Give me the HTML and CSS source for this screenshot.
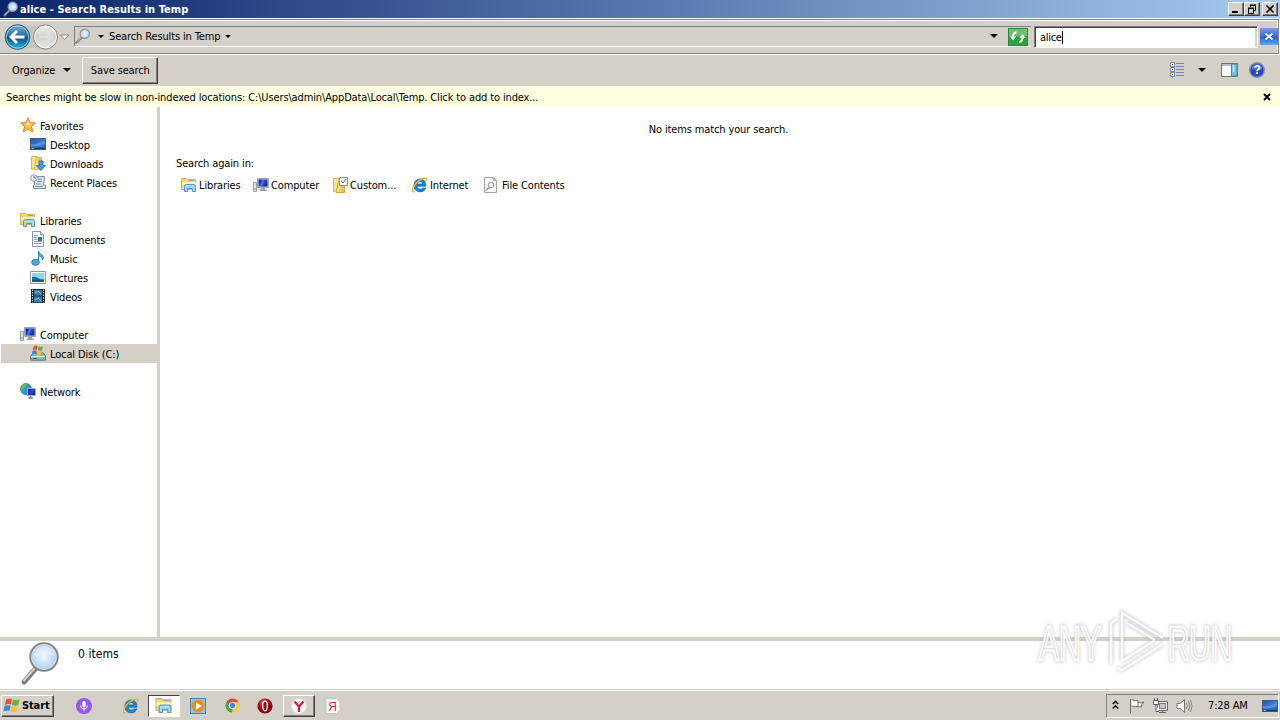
FILE: index.html
```html
<!DOCTYPE html>
<html lang="en">
<head>
    <meta charset="UTF-8">
    <title>alice - Search Results in Temp</title>
    <link rel="stylesheet" href="styles.css">
</head>
<body>
    <!-- shared icons -->
    <svg class="defs" width="0" height="0">
        <defs>
            <linearGradient id="gBlue" x1="0" y1="0" x2="1" y2="1"><stop offset="0" stop-color="#24559f"/><stop offset=".5" stop-color="#3977d4"/><stop offset="1" stop-color="#2b66c4"/></linearGradient>
            <linearGradient id="gFolder" x1="0" y1="0" x2="1" y2="0"><stop offset="0" stop-color="#fbeaa0"/><stop offset="1" stop-color="#e3bb45"/></linearGradient>
            <linearGradient id="gScreen" x1="0" y1="0" x2="1" y2="1"><stop offset="0" stop-color="#0718a0"/><stop offset=".5" stop-color="#2546d4"/><stop offset="1" stop-color="#081678"/></linearGradient>
            <linearGradient id="gBack" x1="0" y1="0" x2="0" y2="1"><stop offset="0" stop-color="#7fb0cf"/><stop offset=".48" stop-color="#246b9e"/><stop offset=".52" stop-color="#075083"/><stop offset="1" stop-color="#28bfe8"/></linearGradient>
            <linearGradient id="gFwd" x1="0" y1="0" x2="0" y2="1"><stop offset="0" stop-color="#efefef"/><stop offset=".5" stop-color="#cfcfcd"/><stop offset="1" stop-color="#e8e8e6"/></linearGradient>
            <radialGradient id="gLens"><stop offset="0" stop-color="#f2f9ff"/><stop offset="1" stop-color="#a9cef2"/></radialGradient>
            <radialGradient id="gRed" cx=".4" cy=".3"><stop offset="0" stop-color="#e88"/><stop offset=".5" stop-color="#bd1820"/><stop offset="1" stop-color="#7c0810"/></radialGradient>
        </defs>
        <symbol id="lens" viewBox="0 0 16 16">
            <path d="M6.5 9.5 1.5 14.5" stroke="#777" stroke-width="2.4" stroke-linecap="round"/>
            <path d="M6 9.5 1.7 14" stroke="#c9c9cc" stroke-width="1"/>
            <circle cx="9.7" cy="5.8" r="4.6" fill="url(#gLens)" stroke="#8a95a3" stroke-width="1.2"/>
        </symbol>
        <symbol id="star" viewBox="0 0 16 16">
            <path d="M8 .8 10.1 5.7 15.4 6 11.4 9.5 12.7 14.8 8 12 3.3 14.8 4.6 9.5.6 6 5.9 5.7Z" fill="#fbc343" stroke="#e27b1c" stroke-width="1"/>
            <path d="M8 3 9.3 6.6 12.5 7 8 8.5 4 7 6.7 6.6Z" fill="#ffe58e"/>
        </symbol>
        <symbol id="desktop" viewBox="0 0 16 16">
            <rect x=".5" y="2.5" width="15" height="11" fill="url(#gBlue)" stroke="#3b5b93"/>
            <path d="M1 8Q8 9 15 4V8Q8 11 1 10Z" fill="#6aa4ea" opacity=".6"/>
            <path d="M1 12.5H15" stroke="#16397a" stroke-width="1.5"/><path d="M1.5 12.5H4" stroke="#7fd06a"/>
        </symbol>
        <symbol id="downloads" viewBox="0 0 16 16">
            <path d="M1.5 1.5H7V13L1.5 14.5Z" fill="#f9e391" stroke="#d9b95a"/>
            <path d="M6.5 2.5H11.5V14.5H4Z" fill="url(#gFolder)" stroke="#d9b95a"/>
            <path d="M9 6H13V10.5H15.5L11 15.5 6.5 10.5H9Z" fill="#3d98dc" stroke="#246ca8" stroke-width=".8"/>
        </symbol>
        <symbol id="recent" viewBox="0 0 16 16">
            <path d="M4.5 2.5H14.5L13.5 11H15.5V14.5H3.5V11H4.5Z" fill="#dde7ef" stroke="#7e8c99"/>
            <path d="M8 5H12M7 7.500H12M6 10H11M5 12.5H13" stroke="#7c99b4"/>
            <circle cx="4" cy="4" r="3.3" fill="#f4f6f8" stroke="#8b949c"/><path d="M4 2V4H6" stroke="#567" fill="none"/>
        </symbol>
        <symbol id="libs" viewBox="0 0 16 16">
            <path d="M.5 3.5V1.500H5.500L6.500 2.500H14.500V12.500H.5Z" fill="#f0d778" stroke="#d0b055"/>
            <path d="M1 5H15V8H1Z" fill="#fdf3b9"/><path d="M8 3.500H13" stroke="#77b8a0"/>
            <path d="M3.500 14.500V9.500Q3.500 7.500 5.500 7.500H12.500Q14.500 7.500 14.500 9.500V14.500H11.500V11.500H6.500V14.500Z" fill="#a9d9f6" stroke="#4f97cc"/>
        </symbol>
        <symbol id="docs" viewBox="0 0 16 16">
            <path d="M2.500.5H10.500L13.500 3.500V15.500H2.500Z" fill="#fbfcfe" stroke="#8794a8"/>
            <path d="M10.500.5V3.500H13.500" fill="#dbe5f1" stroke="#8794a8"/>
            <path d="M4 4.500H8M4 6.500H7M4 8.500H7M4 10.500H12M4 12.500H12" stroke="#85a7cf"/><rect x="8" y="6" width="4" height="4" fill="#356f9e"/>
        </symbol>
        <symbol id="music" viewBox="0 0 16 16">
            <path d="M8.500 12V1Q9.500 4 12 5Q14.500 7 12.500 10Q12.500 7 9.500 5.800" fill="#4fb4e6" stroke="#2587c4"/>
            <ellipse cx="5.500" cy="12.300" rx="3.800" ry="2.900" fill="#48a9e3" stroke="#2276b4"/>
        </symbol>
        <symbol id="pics" viewBox="0 0 16 16">
            <rect x=".5" y="2.500" width="15" height="12" fill="#fff" stroke="#8e969d"/>
            <rect x="2" y="4" width="12" height="9" fill="#8fd6f0"/><path d="M2 8Q5 7 8 9T14 10V13H2Z" fill="#1d6f83"/><path d="M2 11Q9 10 14 12V13H2Z" fill="#1b4e9a"/>
        </symbol>
        <symbol id="video" viewBox="0 0 16 16">
            <rect x="1" y="1" width="14" height="14" fill="#23262b"/><rect x="4" y="2" width="8" height="5.500" fill="#2e7eb5"/><rect x="4" y="8.500" width="8" height="6" fill="#347dac"/>
            <path d="M5 5 8 3 11 6M5 12 8 10 11 13" stroke="#74cfe5" fill="none"/>
            <path d="M2.500 1.500V15M13.500 1.500V15" stroke="#dde2e6" stroke-dasharray="1.300 1.300"/>
        </symbol>
        <symbol id="computer" viewBox="0 0 16 16">
            <path d="M.5 5.500H3.500V14.500H.5Z" fill="#dfe1e4" stroke="#9a9da2"/><path d="M1 12H3" stroke="#5b5"/>
            <path d="M4.500 1.500H15.500V10.500H4.500Z" fill="#c7ccd6" stroke="#9ca3b1"/><path d="M5.500 2.500H14.500V9.500H5.500Z" fill="url(#gScreen)"/>
            <path d="M9 2.500H11.500L9 9.500H7Z" fill="#7590ee" opacity=".6"/><path d="M8 11H12V12.500H14V14H6.500V12.500H8Z" fill="#9ba1ad"/>
        </symbol>
        <symbol id="flag4" viewBox="0 0 16 16">
            <path d="M2.500 2.500Q5 .5 8 2L7 7Q4 6 1.200 7.500Z" fill="#e6532b"/><path d="M9 2.400Q12 4 15 2.200L13.800 7.500Q11 9 8 7.400Z" fill="#6dac35"/>
            <path d="M1 8.500Q4 7 6.800 8.200L5.600 13Q3 12-.1 13.500Z" fill="#3f82d6"/><path d="M7.800 8.600Q11 10 13.500 8.700L12.300 13.600Q9 15 6.600 13.500Z" fill="#f5be2c"/>
        </symbol>
        <symbol id="disk" viewBox="0 0 16 16">
            <path d="M.8 11 3 8H13.500L15.500 11V15.200H.8Z" fill="#8eb3c0" stroke="#557782"/><path d="M1 11.500H15" stroke="#dcebee"/><path d="M3 13.500H7" stroke="#476e7b"/><rect x="12" y="13" width="2" height="1" fill="#69e03e"/>
            <use href="#flag4" x="1.500" y="-.5" width="12.500" height="12"/>
        </symbol>
        <symbol id="network" viewBox="0 0 16 16">
            <circle cx="6" cy="6" r="5.500" fill="#3390d1" stroke="#1d6aa6" stroke-width=".7"/><path d="M1 4Q3 0 7 1L6 4 3 6 4 9 1 7Z" fill="#5bc05b"/>
            <rect x="7.500" y="5.500" width="8" height="7" fill="url(#gScreen)" stroke="#a1adc3"/><path d="M10.500 13V15M8.500 15H13" stroke="#6c7482" stroke-width="1.500"/>
        </symbol>
        <symbol id="ie" viewBox="0 0 16 16">
            <path d="M14 9.200H5Q5.200 12.200 8.300 12.200Q10 12.200 10.700 10.900H13.800Q12.500 14.900 8.200 14.900Q1.900 14.500 1.800 8.300Q2.200 2.100 8.200 1.900Q14.200 2.300 14 9.200M5.100 6.900H10.700Q10.300 4.500 8 4.500Q5.600 4.600 5.100 6.900" fill="#1987d2" stroke="#0a5297" stroke-width=".6" fill-rule="evenodd"/>
            <path d="M2.500 14.700Q-.8 15.500 1 11 4.200 4.300 11 1.500 16.200-.4 14.400 4.400" fill="none" stroke="#e7b529" stroke-width="1.400"/>
        </symbol>
        <symbol id="custom" viewBox="0 0 16 16">
            <path d="M1.500 1.500H7V13L1.500 14.500Z" fill="#f9e391" stroke="#d9b95a"/><path d="M6.500 4.500H12.500V15.500H4Z" fill="url(#gFolder)" stroke="#cda647"/>
            <path d="M7.500.5H15.500V8.500H7.500Z" fill="#f8fbff" stroke="#7c90ac"/><path d="M9 4 11 6 14 2" fill="none" stroke="#3b6f9f"/>
        </symbol>
        <symbol id="filec" viewBox="0 0 16 16">
            <path d="M1.500.5H10.500L13.500 3.500V15.500H1.500Z" fill="#fafafa" stroke="#a0a4aa"/><path d="M10.500.5V3.500H13.500" fill="none" stroke="#a0a4aa"/>
            <circle cx="8" cy="8" r="2.800" fill="#e8f3fa" stroke="#8b9299"/><path d="M6 10.500 3 13.500" stroke="#8b9299" stroke-width="1.500"/>
        </symbol>
    </svg>

    <div class="window">
        <header class="titlebar">
            <svg class="icon"><use href="#lens"/></svg>
            <h1>alice - Search Results in Temp</h1>
            <div class="caption-buttons">
                <button class="caption"><svg width="14" height="12"><path d="M3 9H9" stroke="#000" stroke-width="2"/></svg></button>
                <button class="caption"><svg width="14" height="12"><path d="M5 2.500H10.500V7.500H8.500M5.500 4V2M5 2H11" fill="none" stroke="#000"/><path d="M3.500 5.500H8.500V10.500H3.500ZM3 5H9" fill="none" stroke="#000"/></svg></button>
                <button class="caption close"><svg width="14" height="12"><path d="M3.500 2.500 10.500 9.500M10.500 2.500 3.500 9.500" stroke="#000" stroke-width="1.700"/></svg></button>
            </div>
        </header>

        <div class="navbar">
            <svg class="nav-buttons" width="72" height="30">
                <path d="M18 1.500Q32 7 46 1.500V28.500Q32 23 18 28.500Z" fill="#c6c3bc"/>
                <circle cx="17.500" cy="15" r="12.300" fill="url(#gBack)" stroke="#285d83"/><circle cx="17.500" cy="15" r="11.200" fill="none" stroke="#d5eaf5" opacity=".6"/>
                <path d="M11.500 15H24.500M17 9 11 15 17 21" fill="none" stroke="#fff" stroke-width="2.800"/>
                <circle cx="45.500" cy="15" r="12" fill="url(#gFwd)" stroke="#888"/><circle cx="45.500" cy="15" r="10.800" fill="none" stroke="#fff" opacity=".7"/>
                <path d="M39 15H51M46 9.500 52 15 46 20.500" fill="none" stroke="#ddd" stroke-width="2.500"/>
                <path d="M60.500 13H69L64.700 17.500Z" fill="#f4f4f2" stroke="#8a8984" stroke-width=".9"/>
            </svg>
            <div class="address">
                <svg class="icon"><use href="#lens"/></svg>
                <i class="arrow small"></i>
                <span class="crumb">Search Results in Temp</span>
                <i class="arrow small"></i>
                <i class="arrow history"></i>
            </div>
            <button class="refresh"><svg width="20" height="18"><rect width="20" height="18" fill="#2da43c"/><rect width="20" height="8" fill="#6bc26e"/><rect x=".5" y=".5" width="19" height="17" fill="none" stroke="#2f8a3a"/><path d="M8.500 4.500Q5 4.500 5 9" fill="none" stroke="#fff" stroke-width="2"/><path d="M1.800 8.500H8.200L5 12.500Z" fill="#fff"/><path d="M11 14Q14.500 13.500 14.500 9.500" fill="none" stroke="#fff" stroke-width="2"/><path d="M11.300 10H17.700L14.500 6Z" fill="#fff"/></svg></button>
            <div class="search"><span class="query">alice</span></div>
            <button class="clear"><svg width="18" height="17"><path d="M5.500 5.500 12.500 11.500M12.500 5.500 5.500 11.500" stroke="#234fa0" stroke-width="3.200"/><path d="M5.500 5.500 12.500 11.500M12.500 5.500 5.500 11.500" stroke="#fff" stroke-width="1.900"/></svg></button>
        </div>

        <div class="toolbar">
            <span class="organize">Organize</span>
            <i class="arrow"></i>
            <button class="save">Save search</button>
            <div class="view-tools">
                <svg width="16" height="16"><path d="M1.500.5H5.500V4.500H1.500ZM1.500 5.500H5.500V9.500H1.500ZM1.500 10.500H5.500V14.500H1.500Z" fill="#fff" stroke="#718a94"/><path d="M3 2.500H4M3 7.500H4M3 12.500H4" stroke="#247"/><path d="M7 1.500H15M7 4.500H15M7 7.500H15M7 10.500H15M7 13.500H15" stroke="#7782aa"/></svg>
                <i class="arrow"></i>
                <svg width="17" height="16"><path d="M.5 1.500H16.500V14.500H.5Z" fill="#fff" stroke="#54778f"/><path d="M1 3H10" stroke="#a8c2d1" stroke-width="2"/><path d="M10.500 2H16V14H10.500Z" fill="#81c2e2" stroke="#4387aa"/><path d="M12 3H13V10H12Z" fill="#d3f0fb"/></svg>
                <svg width="16" height="16"><circle cx="8" cy="8" r="7.300" fill="#2749b8" stroke="#8391b2" stroke-width="1.400"/><path d="M2.500 7Q3 2.500 8 2.300 13 2.500 13.500 7Q8 9 2.500 7" fill="#6c91df" opacity=".6"/><text x="8" y="12.200" class="help-mark">?</text></svg>
            </div>
        </div>

        <div class="infobar">
            <span>Searches might be slow in non-indexed locations: C:\Users\admin\AppData\Local\Temp. Click to add to index...</span>
            <svg width="8" height="8"><path d="M1 1 7 7M7 1 1 7" stroke="#000" stroke-width="2"/></svg>
        </div>

        <div class="content">
            <nav class="sidebar">
                <ul>
                    <li class="group"><svg class="icon"><use href="#star"/></svg><span>Favorites</span></li>
                    <li><svg class="icon"><use href="#desktop"/></svg><span>Desktop</span></li>
                    <li><svg class="icon"><use href="#downloads"/></svg><span>Downloads</span></li>
                    <li><svg class="icon"><use href="#recent"/></svg><span>Recent Places</span></li>
                </ul>
                <ul>
                    <li class="group"><svg class="icon"><use href="#libs"/></svg><span>Libraries</span></li>
                    <li><svg class="icon"><use href="#docs"/></svg><span>Documents</span></li>
                    <li><svg class="icon"><use href="#music"/></svg><span>Music</span></li>
                    <li><svg class="icon"><use href="#pics"/></svg><span>Pictures</span></li>
                    <li><svg class="icon"><use href="#video"/></svg><span>Videos</span></li>
                </ul>
                <ul>
                    <li class="group"><svg class="icon"><use href="#computer"/></svg><span>Computer</span></li>
                    <li class="selected"><svg class="icon"><use href="#disk"/></svg><span>Local Disk (C:)</span></li>
                </ul>
                <ul>
                    <li class="group"><svg class="icon"><use href="#network"/></svg><span>Network</span></li>
                </ul>
            </nav>
            <main class="results">
                <p class="empty">No items match your search.</p>
                <p class="again">Search again in:</p>
                <div class="places">
                    <a class="p-lib"><svg class="icon"><use href="#libs"/></svg>Libraries</a>
                    <a class="p-comp"><svg class="icon"><use href="#computer"/></svg>Computer</a>
                    <a class="p-cust"><svg class="icon"><use href="#custom"/></svg>Custom...</a>
                    <a class="p-net"><svg class="icon"><use href="#ie"/></svg>Internet</a>
                    <a class="p-file"><svg class="icon"><use href="#filec"/></svg>File Contents</a>
                </div>
            </main>
        </div>

        <footer class="details">
            <svg width="42" height="44"><path d="M16 26 4 40" stroke="#77797c" stroke-width="5" stroke-linecap="round"/><path d="M15 26 3.500 39" stroke="#d4d5d7" stroke-width="2"/><circle cx="24" cy="15" r="13.500" fill="url(#gLens)" stroke="#808388" stroke-width="2.400"/><circle cx="24" cy="15" r="12.300" fill="none" stroke="#dadde0" stroke-width="1.200"/><path d="M13 16Q24 10 35 14Q34 4 24 4 14 5 13 16" fill="#fff" opacity=".35"/></svg>
            <span>0 items</span>
        </footer>
    </div>

    <div class="taskbar">
        <button class="start"><svg width="18" height="17"><use href="#flag4" width="18" height="17"/></svg>Start</button>
        <div class="task t-alice"><svg width="16" height="16"><circle cx="8" cy="8" r="8" fill="#9158f2"/><rect x="6.300" y="3" width="3.400" height="6.500" rx="1.700" fill="#fff"/><path d="M4.500 7.500Q4.800 11 8 11T11.500 7.500M8 11V13" fill="none" stroke="#fff"/></svg></div>
        <div class="task t-ie"><svg class="icon"><use href="#ie"/></svg></div>
        <div class="task pressed"><svg width="18" height="17"><use href="#libs" width="18" height="17"/></svg></div>
        <div class="task t-media"><svg width="16" height="16"><rect x=".5" y=".5" width="15" height="15" fill="#8ec7eb" stroke="#3b87bb"/><circle cx="8" cy="8" r="6.300" fill="#f28c16"/><path d="M6 4.500 12 8 6 11.500Z" fill="#fff"/></svg></div>
        <div class="task t-chrome"><svg width="15" height="15" viewBox="0 0 16 16"><circle cx="8" cy="8" r="7.500" fill="#f8c93a"/><path d="M1.500 4.200A7.500 7.500 0 0 1 14.500 4.200H8Q5 5 4.800 9Z" fill="#e4483b"/><path d="M1.500 4.200 4.800 9.800 8 11.500 7.500 15.500A7.500 7.500 0 0 1 1.500 4.200" fill="#3fa556"/><circle cx="8" cy="8" r="3.500" fill="#4386ee" stroke="#fff"/></svg></div>
        <div class="task t-opera"><svg width="16" height="16"><circle cx="8" cy="8" r="7.600" fill="url(#gRed)"/><ellipse cx="8" cy="8" rx="2.300" ry="4.800" fill="#8c1118" stroke="#fff" stroke-width="1.200"/></svg></div>
        <div class="task raised"><svg width="16" height="16"><circle cx="8" cy="8" r="7.500" fill="#faf8f7" stroke="#e2dfdb"/><path d="M3.500 3.500 8 8.500 12.500 3.500M8 8V14" fill="none" stroke="#cf2233" stroke-width="2.200"/></svg></div>
        <div class="task t-ya"><svg width="16" height="16"><path d="M1 .5H11.500L15 4V12L11.500 15.500H1Z" fill="#fff" stroke="#c7c0bb"/><text x="7.500" y="12.500" class="ya">Я</text></svg></div>
        <div class="tray">
            <svg width="7" height="11"><path d="M.8 4 3.500 1.300 6.200 4M.8 8.500 3.500 5.800 6.200 8.500" fill="none" stroke="#000" stroke-width="1.500"/></svg>
            <svg width="16" height="16"><path d="M1.500 1V15.500M2.500 1.500Q6 3.500 9 2.500V8.500Q5 9 2.500 8M9 4.500Q12 5.500 15 4L12.500 7 13 8.500Q10 9 8 8.500" fill="#fff" stroke="#6e6d69"/></svg>
            <svg width="17" height="16"><path d="M5.500 3.500H15.500V12.500H5.500Z" fill="#f4f4f2" stroke="#666"/><path d="M7.500 5.500H13.500V10.500H7.500Z" fill="#c9c7c1" stroke="#777"/><path d="M7 14.500H14M10.500 12V14" stroke="#666"/><path d="M1.500 2.500H6.500V6.500H1.500ZM2.500 0V3M5.500 0V3M4 6V13.500H7" fill="#fff" stroke="#5d5c58"/></svg>
            <svg width="17" height="16"><path d="M1 5.500H4L8.500 1.500V14.500L4 10.500H1Z" fill="#fff" stroke="#777"/><path d="M10.500 5Q12 8 10.500 11M12.500 3Q15 8 12.500 13M14.500 2Q17.500 8 14.500 14" fill="none" stroke="#888"/></svg>
            <time>7:28 AM</time>
            <svg class="icon"><use href="#desktop"/></svg>
        </div>
    </div>

    <svg class="watermark" width="204" height="72">
        <defs>
            <g id="mark">
                <text x="6" y="55" textLength="62" lengthAdjust="spacingAndGlyphs">ANY</text>
                <text x="135" y="55" textLength="64" lengthAdjust="spacingAndGlyphs">RUN</text>
                <path d="M78 59V18L84 14M89 56V8L130 33M94 18 122 35M89 56 121 36M84 63 89 65 130 39"/>
            </g>
        </defs>
        <use href="#mark" class="wm-glow"/>
        <use href="#mark" class="wm-face"/>
    </svg>
</body>
</html>
```

FILE: styles.css
```css
* {
    margin: 0;
    padding: 0;
    box-sizing: border-box;
}

body {
    width: 1280px;
    height: 720px;
    overflow: hidden;
    display: flex;
    flex-direction: column;
    background: #fff;
    color: #000;
    font-family: "DejaVu Sans Condensed", "DejaVu Sans", sans-serif;
    font-stretch: condensed;
    font-size: 11px;
    line-height: 13px;
    letter-spacing: -0.13px;
    white-space: nowrap;
}

button {
    font: inherit;
    letter-spacing: inherit;
    color: inherit;
    border: none;
}

svg {
    display: block;
    flex: none;
}

.defs {
    position: absolute;
}

.icon {
    width: 16px;
    height: 16px;
}

.window {
    flex: 1;
    display: flex;
    flex-direction: column;
}

/* title bar */
.titlebar {
    height: 18px;
    display: flex;
    align-items: center;
    padding: 0 2px 0 3px;
    background: linear-gradient(90deg, #0a246a, #a6caf0);
    color: #fff;
}

.titlebar h1 {
    margin-left: 1px;
    font-size: 11px;
    font-weight: bold;
    letter-spacing: 0.05px;
}

.caption-buttons {
    display: flex;
    margin-left: auto;
}

.caption {
    width: 16px;
    height: 14px;
    background: #d4d0c8;
    border: 1px solid;
    border-color: #fff #404040 #404040 #fff;
    box-shadow: inset -1px -1px #808080;
}

.caption.close {
    margin-left: 2px;
}

/* address row */
.navbar {
    height: 35px;
    display: flex;
    align-items: center;
    background: #d4d0c8;
    border: 1px solid #808080;
    border-width: 1px 1px 1px 0;
    box-shadow: inset 0 1px #fff, inset -1px 0 #fff, 0 1px #fff;
    margin-right: 1px;
    margin-top: 1px;
    position: relative;
}

.nav-buttons {
    margin-right: 2px;
}

.address {
    width: 957px;
    height: 21px;
    display: flex;
    align-items: center;
    border-top: 1px solid #808080;
    border-left: 1px solid #808080;
    border-bottom: 1px solid #fff;
    padding: 0 33px 1px 0;
}

.arrow {
    border: 4px solid transparent;
    border-top-color: #000;
    border-bottom: none;
}

.arrow.small {
    border-width: 3px 3px 0;
}

.address .icon {
    margin-right: 7px;
}

.crumb {
    margin: 0 5px 0 5px;
}

.arrow.history {
    margin-left: auto;
}

.refresh {
    margin-left: -23px;
    width: 20px;
}

.search {
    width: 224px;
    height: 22px;
    margin-left: 6px;
    background: #fff;
    border: 1px solid;
    border-color: #808080 #fff #fff #808080;
    box-shadow: inset 1px 1px #404040, inset -2px 0 #d4d0c8;
    padding: 4px 5px;
}

.query {
    display: inline-block;
    height: 13px;
    border-right: 1px solid #000;
    letter-spacing: -0.3px;
}

.clear {
    width: 18px;
    height: 17px;
    margin-left: 2px;
    background: linear-gradient(#7a9cd8, #3d6ecd 50%, #315cc2 52%, #62a8ea);
}

/* command bar */
.toolbar {
    height: 32px;
    display: flex;
    align-items: center;
    background: #d4d0c8;
    border-top: 1px solid #fff;
    padding: 0 0 1px 12px;
}

.organize + .arrow {
    margin-left: 8px;
}

.save {
    width: 76px;
    height: 27px;
    margin-left: 11px;
    background: #d4d0c8;
    border: 1px solid;
    border-color: #fff #404040 #404040 #fff;
    box-shadow: inset -1px -1px #808080;
}

.view-tools {
    display: flex;
    align-items: center;
    margin-left: auto;
    padding-right: 15px;
}

.view-tools .arrow {
    margin: 0 15px 0 13px;
}

.view-tools svg:last-child {
    margin-left: 11px;
}

.help-mark {
    fill: #fff;
    font: bold 12px "Liberation Sans", sans-serif;
    text-anchor: middle;
}

.infobar {
    height: 21px;
    display: flex;
    align-items: center;
    justify-content: space-between;
    background: #ffffe1;
    padding: 0 9px 0 6px;
}

.infobar span {
    padding-top: 2px;
}

/* panes */
.content {
    flex: 1;
    display: flex;
}

.sidebar {
    width: 160px;
    border-right: 3px solid #d4d0c8;
    padding: 9px 0 0 1px;
}

.sidebar ul {
    list-style: none;
    margin-bottom: 19px;
}

.sidebar li {
    height: 19px;
    display: flex;
    align-items: center;
    padding-left: 29px;
}

.sidebar li.group {
    padding-left: 19px;
}

.sidebar .icon {
    margin: 0 4px 1px 0;
}

.sidebar li span {
    padding-top: 1px;
}

.sidebar .selected {
    background: #d4d0c8;
}

.results {
    flex: 1;
    padding: 16px 4px 0 16px;
}

.empty {
    text-align: center;
    padding-right: 15px;
}

.again {
    margin-top: 21px;
}

.places {
    display: flex;
    margin-top: 7px;
    padding-left: 5px;
}

.places a {
    display: flex;
    align-items: center;
    gap: 2px;
}

.p-lib {
    width: 72px;
}

.p-comp {
    width: 79px;
}

.p-cust {
    width: 80px;
}

.p-net {
    width: 71px;
}

.places .p-file {
    gap: 3px;
}

/* details pane */
.details {
    height: 52px;
    display: flex;
    border-top: 4px solid #d4d0c8;
    padding: 1px 0 0 20px;
}

.details span {
    margin: 5px 0 0 16px;
    font-size: 12px;
    line-height: 15px;
    letter-spacing: 0.05px;
}

/* taskbar */
.taskbar {
    height: 31px;
    display: flex;
    align-items: center;
    background: #d4d0c8;
    border-top: 1px solid #d4d0c8;
    box-shadow: inset 0 1px #fff;
    padding: 1px 1px 0;
}

.start {
    width: 53px;
    height: 22px;
    display: flex;
    align-items: center;
    gap: 1px;
    padding-left: 1px;
    background: #d4d0c8;
    font-weight: bold;
    border: 1px solid;
    border-color: #fff #404040 #404040 #fff;
    box-shadow: inset -1px -1px #808080;
}

.task {
    width: 32px;
    height: 22px;
    display: flex;
    align-items: center;
    justify-content: center;
}

.t-alice {
    margin-left: 14px;
}

.t-ie {
    margin-left: 15px;
}

.pressed {
    background: #fff;
    border: 1px solid;
    border-color: #404040 #fff #fff #404040;
    margin-left: 1px;
}

.t-media {
    margin-left: 2px;
}

.t-chrome {
    margin-left: 2px;
}

.t-opera {
    margin-left: 1px;
}

.raised {
    margin-left: 2px;
    border: 1px solid;
    border-color: #fff #404040 #404040 #fff;
    box-shadow: inset -1px -1px #808080;
}

.t-ya {
    margin-left: 2px;
}

.ya {
    fill: #c4323b;
    font: 12px "Liberation Sans", sans-serif;
    text-anchor: middle;
}

.tray {
    width: 173px;
    height: 24px;
    margin-left: auto;
    display: flex;
    align-items: center;
    border: 1px solid;
    border-color: #808080 #fff #fff #808080;
    padding-left: 5px;
}

.tray svg + svg {
    margin-left: 7px;
}

.tray svg:first-child + svg {
    margin-left: 10px;
}

.tray time {
    margin-left: 15px;
}

.tray .icon {
    margin-left: auto;
}

/* video watermark over the desktop */
.watermark {
    position: absolute;
    left: 1033px;
    top: 605px;
    font: 48px "Liberation Sans Narrow", "Liberation Sans", sans-serif;
    letter-spacing: 0;
}

.wm-glow {
    fill: none;
    stroke: #aaa;
    stroke-width: 5px;
    opacity: 0.45;
    filter: blur(1.5px);
}

.wm-face {
    fill: none;
    stroke: #fbfbfb;
    stroke-width: 2.5px;
}
```
